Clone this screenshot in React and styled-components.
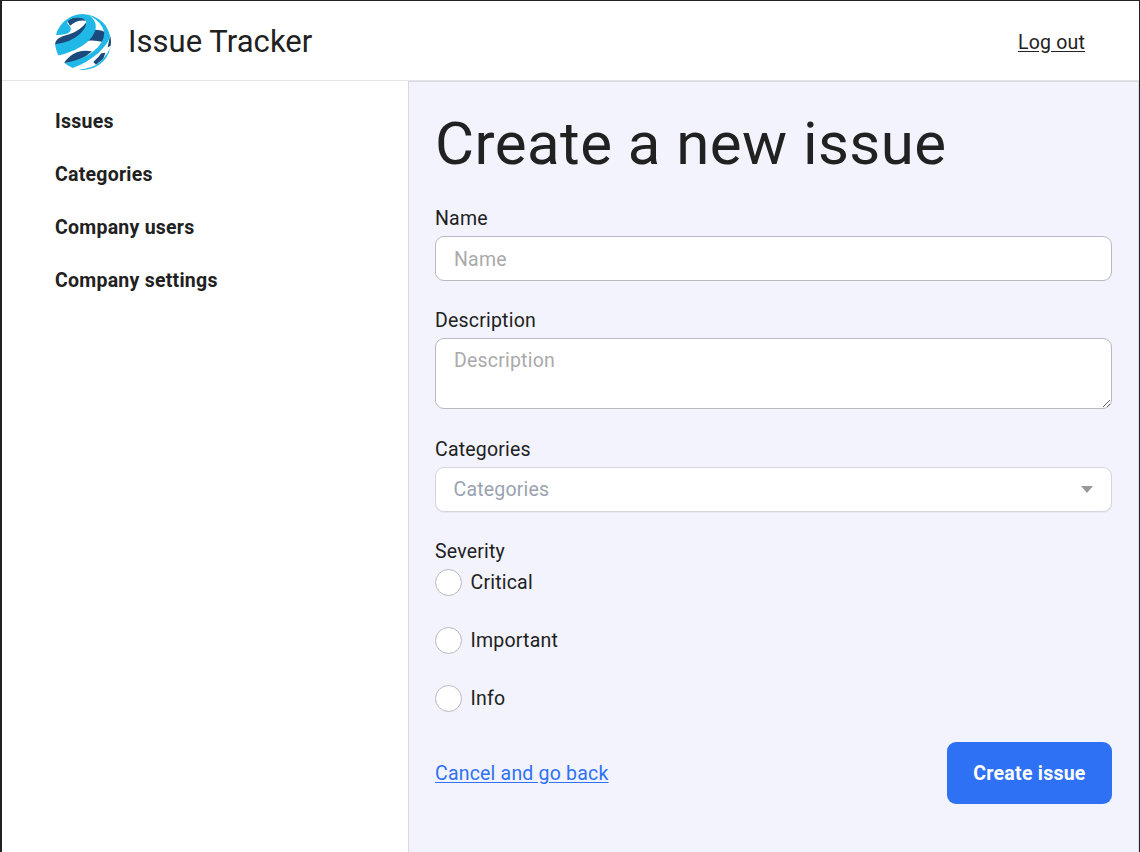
import React from "react";
import styled, { createGlobalStyle } from "styled-components";

const GlobalStyle = createGlobalStyle`
  *, *::before, *::after { box-sizing: border-box; }
  html, body, #root { height: 100%; }
  body {
    margin: 0;
    overflow: hidden;
    font-family: Roboto, "Liberation Sans", sans-serif;
    font-size: 19.5px;
    line-height: 26px;
    letter-spacing: 0.2px;
    color: #212121;
  }
`;

const Page = styled.div`
  height: 852px;
  display: flex;
  flex-direction: column;
  background: #fff;
  border: solid #202224;
  border-width: 1px 1px 0 2px;
`;

const Header = styled.header`
  height: 80px;
  flex: none;
  display: flex;
  align-items: center;
  justify-content: space-between;
  padding: 2px 54px 0 52px;
  border-bottom: 1px solid #e4e4e7;
`;

const Brand = styled.div`
  display: flex;
  align-items: center;
  gap: 16px;
`;

const BrandName = styled.span`
  font-size: 31px;
  line-height: 40px;
  letter-spacing: 0.05px;
`;

const LogOut = styled.a`
  padding-top: 2px;
  color: #212121;
  text-decoration: underline;
  text-underline-offset: 2px;
`;

const Body = styled.div`
  flex: 1;
  display: flex;
`;

const Sidebar = styled.nav`
  width: 406px;
  flex: none;
  display: flex;
  flex-direction: column;
  gap: 27.1px;
  padding: 28px 53px;
`;

const NavItem = styled.a`
  font-weight: 700;
  color: #212121;
  letter-spacing: 0.25px;
`;

const Main = styled.main`
  flex: 1;
  padding: 26px 26px 0;
  background: #f2f3fc;
  border-left: 1px solid #d8d9e2;
  border-top: 1px solid #d8d9e2;
  border-right: 1px solid #dcdde6;
`;

const Heading = styled.h1`
  margin: 0 0 27px;
  font-size: 60px;
  line-height: 71px;
  font-weight: 400;
  letter-spacing: 0.45px;
`;

const Field = styled.div`
  display: flex;
  flex-direction: column;
  gap: 4px;
  margin-bottom: ${(p) => p.$space || 27}px;
`;

const Label = styled.label`
  display: block;
`;

const Input = styled.input`
  height: 45px;
  padding: 1px 18px 0;
  font: inherit;
  letter-spacing: inherit;
  background: #fff;
  border: 1px solid #b9bac0;
  border-radius: 9px;
  outline: none;
  &::placeholder { color: #aaa; opacity: 1; }
`;

const TextArea = styled.textarea`
  display: block;
  height: 71px;
  padding: 9px 18px 8px;
  font: inherit;
  letter-spacing: inherit;
  background: #fff;
  border: 1px solid #b9bac0;
  border-radius: 9px;
  outline: none;
  resize: vertical;
  &::placeholder { color: #aaa; opacity: 1; }
`;

const Select = styled.div`
  height: 45px;
  display: flex;
  align-items: center;
  justify-content: space-between;
  padding: 0 18px 0 17.5px;
  color: #9aa2b1;
  background: #fff;
  border: 1px solid #d5d6dc;
  border-radius: 9px;
  box-shadow: 0 1px 0 #e6e7ef;
`;

const Caret = styled.span`
  border: solid transparent;
  border-width: 7px 6px 0;
  border-top-color: #999;
`;

const RadioGroup = styled.div`
  display: flex;
  flex-direction: column;
  gap: 31px;
  margin-top: 4px;
`;

const RadioOption = styled.label`
  display: flex;
  align-items: center;
  gap: 8.5px;
  height: 26.8px;
`;

const OptionText = styled.span`
  padding-top: 1px;
`;

const Radio = styled.input`
  appearance: none;
  width: 27px;
  height: 27px;
  margin: 0;
  flex: none;
  background: #fff;
  border: 1px solid #b9bac0;
  border-radius: 50%;
`;

const Actions = styled.div`
  display: flex;
  align-items: center;
  justify-content: space-between;
  margin-top: 31px;
`;

const CancelLink = styled.a`
  padding-top: 1px;
  color: #2f71f5;
  text-decoration: underline;
  text-underline-offset: 2px;
`;

const SubmitButton = styled.button`
  width: 165px;
  height: 62px;
  padding: 2px 0 0;
  font: inherit;
  font-weight: 700;
  letter-spacing: 0.25px;
  color: #fff;
  background: #2f71f5;
  border: 0;
  border-radius: 9px;
`;

const Globe = () => (
  <svg width="58" height="58" viewBox="42 39 174 174">
    <clipPath id="disc"><circle cx="129" cy="126" r="84" /></clipPath>
    <g clipPath="url(#disc)">
      <g fill="#1a4b7c">
        <path d="M82 62Q104 46 138 54L136 62Q112 58 90 77Z" />
        <path d="M44 134C50 110 66 110 92 101Q120 92 140 66L140 90Q110 128 44 134Z" />
        <path d="M154 90Q180 86 200 98L190 126Q160 118 128 124Z" />
        <path d="M72 190Q86 166 112 156Q134 150 156 154Q126 184 72 190Z" />
        <path d="M160 186Q176 172 184 160L196 158L190 176L168 194Z" />
        <path d="M203 142L209 112L218 108L216 136Z" />
      </g>
      <g fill="#20b8e6">
        <path d="M46 105C52 80 66 62 90 50Q112 42 136 50Q104 48 86 61Q78 70 87 76Q98 86 88 97Q76 106 46 105Z" />
        <path d="M84 54Q114 34 148 46Q174 66 165 94Q152 128 104 150Q78 162 48 168L42 133Q94 128 122 100Q144 76 137 62Q130 50 100 54Z" />
        <path d="M134 40Q178 50 200 78L211 108Q204 132 176 158Q142 188 96 205L90 204L72 190Q132 178 162 152Q196 124 192 94Q184 66 148 46Z" />
        <path d="M214 138Q194 178 168 195Q144 207 118 208L122 214Q190 216 216 144Z" />
      </g>
    </g>
  </svg>
);

const NAV = ["Issues", "Categories", "Company users", "Company settings"];
const SEVERITIES = ["Critical", "Important", "Info"];

export default function App() {
  return (
    <>
      <GlobalStyle />
      <Page>
        <Header>
          <Brand>
            <Globe />
            <BrandName>Issue Tracker</BrandName>
          </Brand>
          <LogOut>Log out</LogOut>
        </Header>
        <Body>
          <Sidebar>
            {NAV.map((item) => <NavItem key={item}>{item}</NavItem>)}
          </Sidebar>
          <Main>
            <Heading>Create a new issue</Heading>
            <Field>
              <Label htmlFor="name">Name</Label>
              <Input id="name" placeholder="Name" />
            </Field>
            <Field $space={28}>
              <Label htmlFor="description">Description</Label>
              <TextArea id="description" placeholder="Description" />
            </Field>
            <Field>
              <Label>Categories</Label>
              <Select>Categories<Caret /></Select>
            </Field>
            <Label as="div">Severity</Label>
            <RadioGroup>
              {SEVERITIES.map((s) => (
                <RadioOption key={s}>
                  <Radio type="radio" name="severity" />
                  <OptionText>{s}</OptionText>
                </RadioOption>
              ))}
            </RadioGroup>
            <Actions>
              <CancelLink>Cancel and go back</CancelLink>
              <SubmitButton>Create issue</SubmitButton>
            </Actions>
          </Main>
        </Body>
      </Page>
    </>
  );
}
